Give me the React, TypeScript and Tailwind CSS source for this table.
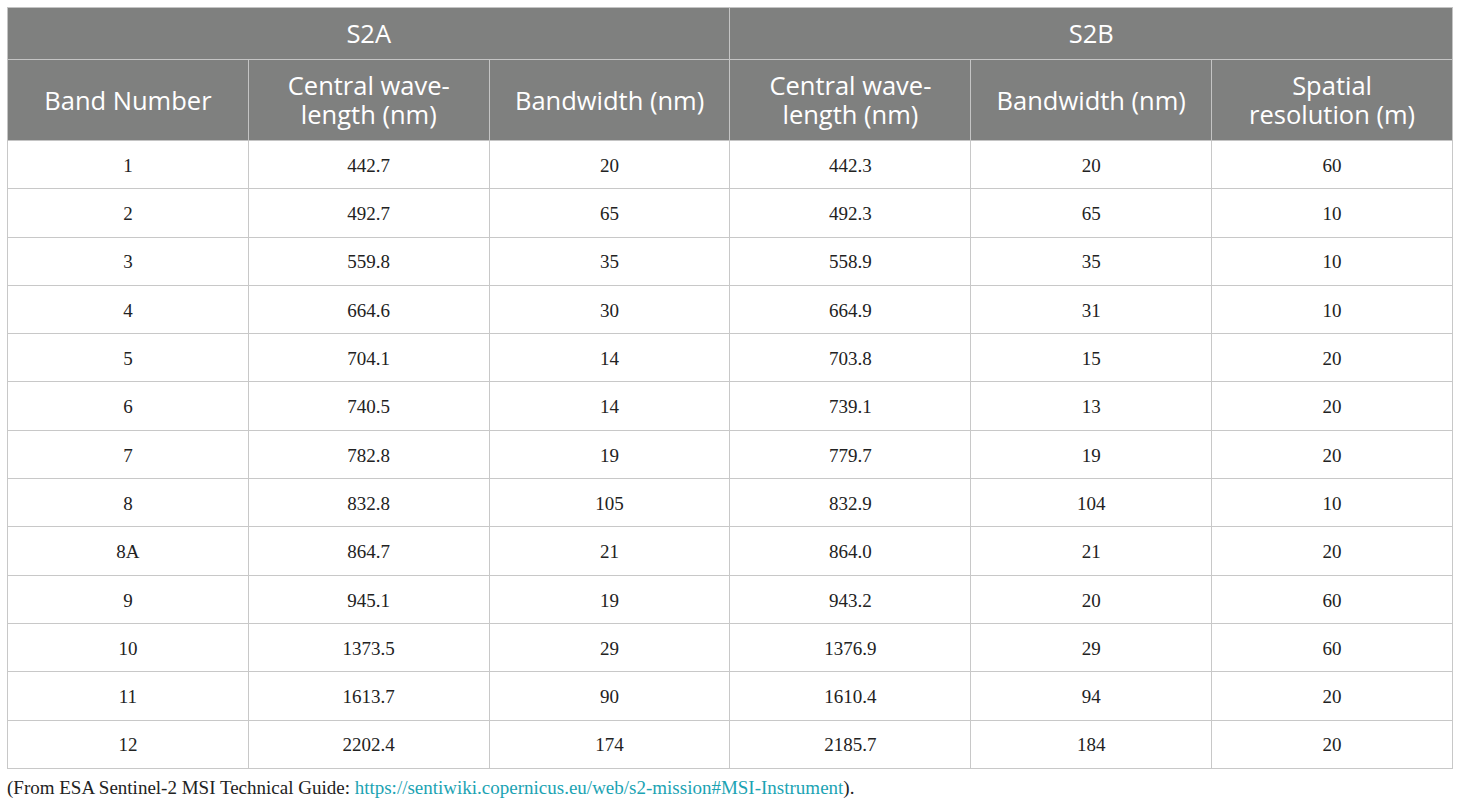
const rows = [
  ['1', '442.7', '20', '442.3', '20', '60'],
  ['2', '492.7', '65', '492.3', '65', '10'],
  ['3', '559.8', '35', '558.9', '35', '10'],
  ['4', '664.6', '30', '664.9', '31', '10'],
  ['5', '704.1', '14', '703.8', '15', '20'],
  ['6', '740.5', '14', '739.1', '13', '20'],
  ['7', '782.8', '19', '779.7', '19', '20'],
  ['8', '832.8', '105', '832.9', '104', '10'],
  ['8A', '864.7', '21', '864.0', '21', '20'],
  ['9', '945.1', '19', '943.2', '20', '60'],
  ['10', '1373.5', '29', '1376.9', '29', '60'],
  ['11', '1613.7', '90', '1610.4', '94', '20'],
  ['12', '2202.4', '174', '2185.7', '184', '20'],
];

const subHeads = [
  ['Band Number'],
  ['Central wave-', 'length (nm)'],
  ['Bandwidth (nm)'],
  ['Central wave-', 'length (nm)'],
  ['Bandwidth (nm)'],
  ['Spatial', 'resolution (m)'],
];

export default function App() {
  return (
    <div className="min-h-screen bg-white pt-[7px] px-[7px]">
      <table className="w-[1446px] border-collapse table-fixed">
        <thead className="font-['Open_Sans',sans-serif] text-white text-[25.5px]">
          <tr className="h-[52px] bg-[#7f807f]">
            <th colSpan={3} className="border border-[#c4c4c4] font-normal">S2A</th>
            <th colSpan={3} className="border border-[#c4c4c4] font-normal">S2B</th>
          </tr>
          <tr className="h-[81px] bg-[#7f807f]">
            {subHeads.map((lines, i) => (
              <th key={i} className="border border-[#c4c4c4] font-normal leading-[29px] w-[241px]">
                {lines.map((l, j) => (
                  <div key={j}>{l}</div>
                ))}
              </th>
            ))}
          </tr>
        </thead>
        <tbody className="font-['Liberation_Serif',serif] text-[19px] text-[#222]">
          {rows.map((r, i) => (
            <tr key={i} className="h-[48.3px]">
              {r.map((c, j) => (
                <td key={j} className="border border-[#c8c8c8] text-center pt-[3px]">
                  {c}
                </td>
              ))}
            </tr>
          ))}
        </tbody>
      </table>
      <p className="mt-[5px] font-['Liberation_Serif',serif] text-[19px] text-[#222]">
        (From ESA Sentinel-2 MSI Technical Guide:{' '}
        <a href="#" className="text-[#1ba3b3]">
          https://sentiwiki.copernicus.eu/web/s2-mission#MSI-Instrument
        </a>
        ).
      </p>
    </div>
  );
}
